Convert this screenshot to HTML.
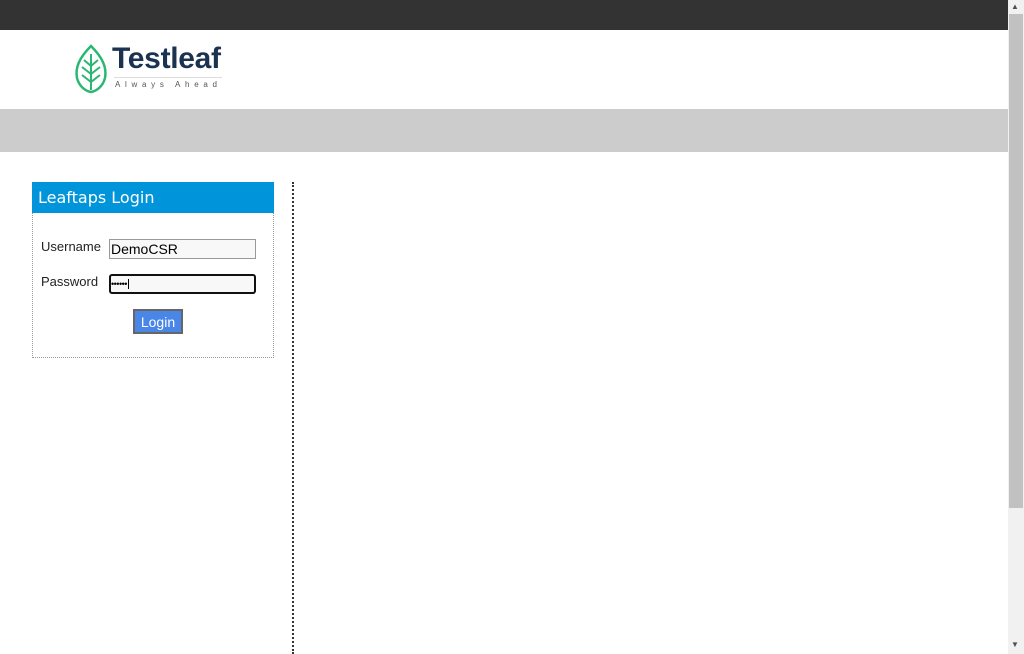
<!DOCTYPE html>
<html><head><style>
body{margin:0;width:1024px;height:654px;overflow:hidden;background:#fff;font-family:"Liberation Sans",sans-serif;position:relative}
.abs{position:absolute}
</style></head><body>
<div class="abs" style="left:0;top:0;width:1008px;height:30px;background:#333"></div>
<div class="abs" style="left:1008px;top:0;width:16px;height:654px;background:#f1f1f1"></div>
<div class="abs" style="left:1009px;top:14px;width:14px;height:494px;background:#c1c1c1"></div>
<div class="abs" style="left:1011px;top:2px;font-size:8px;color:#505050">▲</div>
<div class="abs" style="left:1011px;top:640px;font-size:8px;color:#505050">▼</div>
<svg class="abs" style="left:73px;top:44px" width="36" height="50" viewBox="0 0 36 50">
<path d="M18 2 C6 14 2 24 4 34 C6 42 12 47 18 48 C24 47 30 42 32 34 C34 24 30 14 18 2 Z" fill="none" stroke="#2bb673" stroke-width="2.5"/>
<path d="M18 10 V46 M18 22 L11 16 M18 22 L25 16 M18 30 L9 23 M18 30 L27 23 M18 38 L9 31 M18 38 L27 31" stroke="#2bb673" stroke-width="2" fill="none"/>
</svg>
<div class="abs" style="left:112px;top:42px;font-size:30px;font-weight:bold;color:#1b3350;letter-spacing:-0.3px">Testleaf</div>
<div class="abs" style="left:114px;top:77px;width:108px;border-top:1px solid #ddd"></div>
<div class="abs" style="left:115px;top:80px;font-size:8px;color:#555;letter-spacing:4.7px">Always Ahead</div>
<div class="abs" style="left:0;top:109px;width:1008px;height:43px;background:#ccc"></div>
<div class="abs" style="left:32px;top:182px;width:242px;height:31px;background:#0095da;color:#fff;font-family:'DejaVu Sans',sans-serif;font-size:16px;line-height:32px;padding-left:6px;box-sizing:border-box">Leaftaps Login</div>
<div class="abs" style="left:32px;top:213px;width:242px;height:145px;border:1px dotted #999;border-top:none;box-sizing:border-box"></div>
<div class="abs" style="left:41px;top:239px;font-size:13px;color:#222">Username</div>
<div class="abs" style="left:41px;top:274px;font-size:13px;color:#222">Password</div>
<div class="abs" style="left:109px;top:239px;width:147px;height:20px;border:1px solid #999;background:#f8f8f8;box-sizing:border-box;font-size:14px;line-height:18px;padding-left:1px;color:#000">DemoCSR</div>
<div class="abs" style="left:109px;top:274px;width:147px;height:20px;border:2px solid #111;border-radius:3px;background:#f8f8f8;box-sizing:border-box;font-size:9px;line-height:16px;color:#000;letter-spacing:-0.5px">••••••<span style="border-left:1px solid #000;margin-left:1px"> </span></div>
<div class="abs" style="left:133px;top:309px;width:50px;height:25px;border:2px solid #666;background:#4a86e8;box-sizing:border-box;color:#fff;font-size:14px;text-align:center;line-height:22px">Login</div>
<div class="abs" style="left:292px;top:182px;height:472px;border-left:2px dotted #333"></div>
</body></html>
